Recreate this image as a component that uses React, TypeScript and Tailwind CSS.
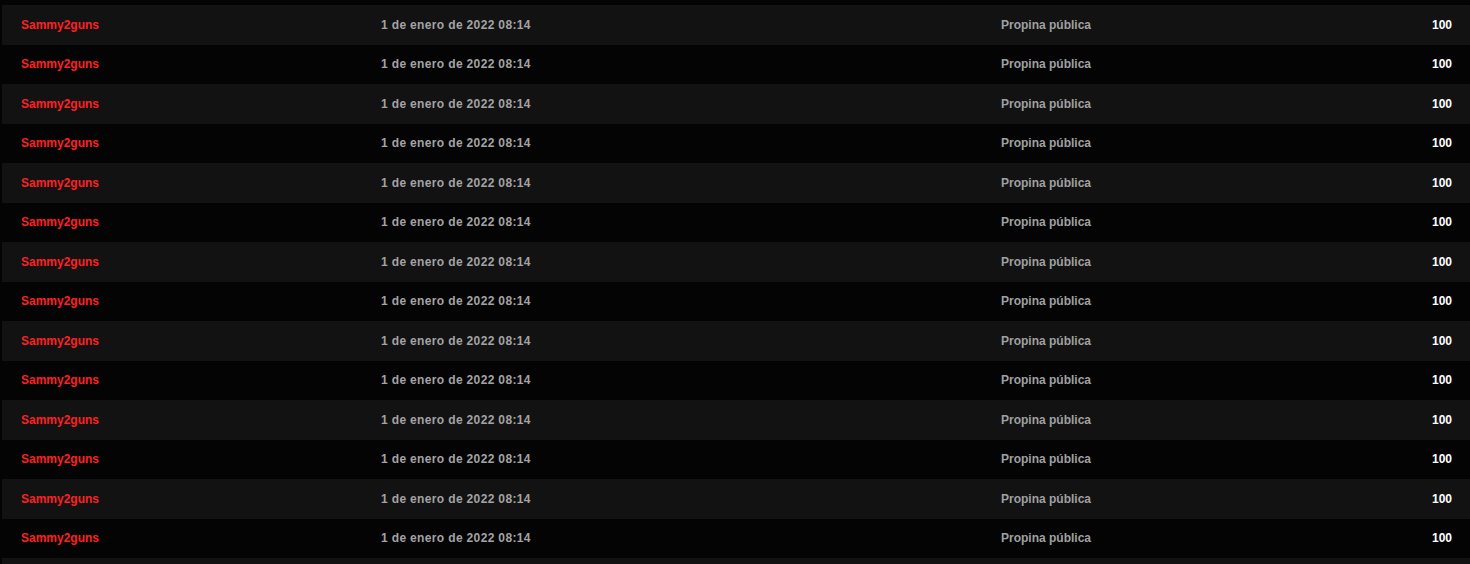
import React from "react";

const rows = Array.from({ length: 14 }, (_, i) => i);

export default function App() {
  return (
    <div className="w-full h-[564px] bg-[#040404] pt-[5px] pl-[2px] overflow-hidden">
      <div className="flex flex-col">
        {rows.map((i) => (
          <div
            key={i}
            className={`grid grid-cols-[379px_620px_1fr] items-center h-[39.5px] text-[12px] font-bold font-['Liberation_Sans',Arial,sans-serif] ${
              i % 2 === 0 ? "bg-[#121212]" : "bg-[#040404]"
            }`}
          >
            <div className="pl-[19px] text-[#ff2020]">Sammy2guns</div>
            <div className="text-[#a3a3a3] tracking-[0.35px]">1 de enero de 2022 08:14</div>
            <div className="flex justify-between pr-[18px]">
              <span className="text-[#a0a0a0]">Propina pública</span>
              <span className="text-white">100</span>
            </div>
          </div>
        ))}
        <div className="h-[40px] bg-[#121212]" />
      </div>
    </div>
  );
}
